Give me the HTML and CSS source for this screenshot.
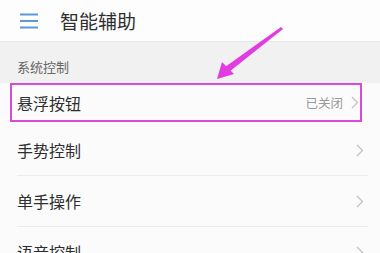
FILE: index.html
```html
<!DOCTYPE html>
<html lang="zh-CN">
<head>
    <meta charset="UTF-8">
    <title>智能辅助</title>
    <link rel="stylesheet" href="styles.css">
</head>
<body>
    <div class="screen">
        <div class="top-bar">
            <svg class="menu-icon" width="18" height="16" viewBox="0 0 18 16">
                <path d="M0 1.5H18M0 8H18M0 14.5H18" stroke="#5a9ad8" stroke-width="2"/>
            </svg>
            <span class="title">智能辅助</span>
        </div>

        <div class="section-label">系统控制</div>

        <ul class="settings">
            <li class="row highlight">
                <span class="row-name">悬浮按钮</span>
                <span class="row-value">已关闭</span>
                <svg class="chevron" width="8" height="13" viewBox="0 0 8 13"><path d="M1 1L6.5 6.5L1 12" fill="none" stroke="#c4c4c4" stroke-width="1.4"/></svg>
            </li>
            <li class="row">
                <span class="row-name">手势控制</span>
                <svg class="chevron" width="8" height="13" viewBox="0 0 8 13"><path d="M1 1L6.5 6.5L1 12" fill="none" stroke="#c4c4c4" stroke-width="1.4"/></svg>
            </li>
            <li class="row">
                <span class="row-name">单手操作</span>
                <svg class="chevron" width="8" height="13" viewBox="0 0 8 13"><path d="M1 1L6.5 6.5L1 12" fill="none" stroke="#c4c4c4" stroke-width="1.4"/></svg>
            </li>
            <li class="row">
                <span class="row-name">语音控制</span>
                <svg class="chevron" width="8" height="13" viewBox="0 0 8 13"><path d="M1 1L6.5 6.5L1 12" fill="none" stroke="#c4c4c4" stroke-width="1.4"/></svg>
            </li>
        </ul>

        <!-- annotation arrow drawn over the screenshot -->
        <svg class="pointer" width="380" height="90" viewBox="0 0 380 90">
            <polygon points="281,27 283,29 229,72 225,67" fill="#e23be0"/>
            <polygon points="217,79 222,62 234,74" fill="#e23be0"/>
        </svg>
    </div>
</body>
</html>
```

FILE: styles.css
```css
body {
    margin: 0;
    background: #fbfbfb;
    font-family: "Noto Sans CJK SC", "Noto Sans", sans-serif;
    color: #333;
}
.screen {
    position: relative;
    width: 380px;
    height: 253px;
    overflow: hidden;
}
.top-bar {
    height: 42px;
    display: flex;
    align-items: center;
    padding-left: 20px;
    background: #fdfdfd;
    border-bottom: 1px solid #e6e6e6;
    box-sizing: border-box;
}
.menu-icon {
    margin-top: 1px;
}
.title {
    margin-left: 22px;
    font-size: 19px;
    color: #2e2e2e;
}
.section-label {
    height: 41px;
    box-sizing: border-box;
    padding: 15px 0 0 17px;
    background: #f1f1f1;
    font-size: 13px;
    color: #666;
}
.settings {
    list-style-type: none;
    margin: 0;
    padding: 0;
    background: #fbfbfb;
}
.row {
    display: flex;
    align-items: center;
    height: 51px;
    margin: 0 12px 0 17px;
    border-bottom: 1px solid #ebebeb;
    box-sizing: border-box;
}
.row-name {
    flex: 1;
    font-size: 16px;
    color: #2e2e2e;
}
.row-value {
    font-size: 12.5px;
    color: #999;
    margin-right: 8px;
}
.chevron {
    margin-right: 4px;
}
.row.highlight {
    height: 39px;
    margin: 0 18px 3px 10px;
    padding-left: 5px;
    border: 2px solid #d94ad8;
}
.row.highlight .chevron {
    margin-right: 1px;
}
.pointer {
    position: absolute;
    left: 0;
    top: 0;
}
```
